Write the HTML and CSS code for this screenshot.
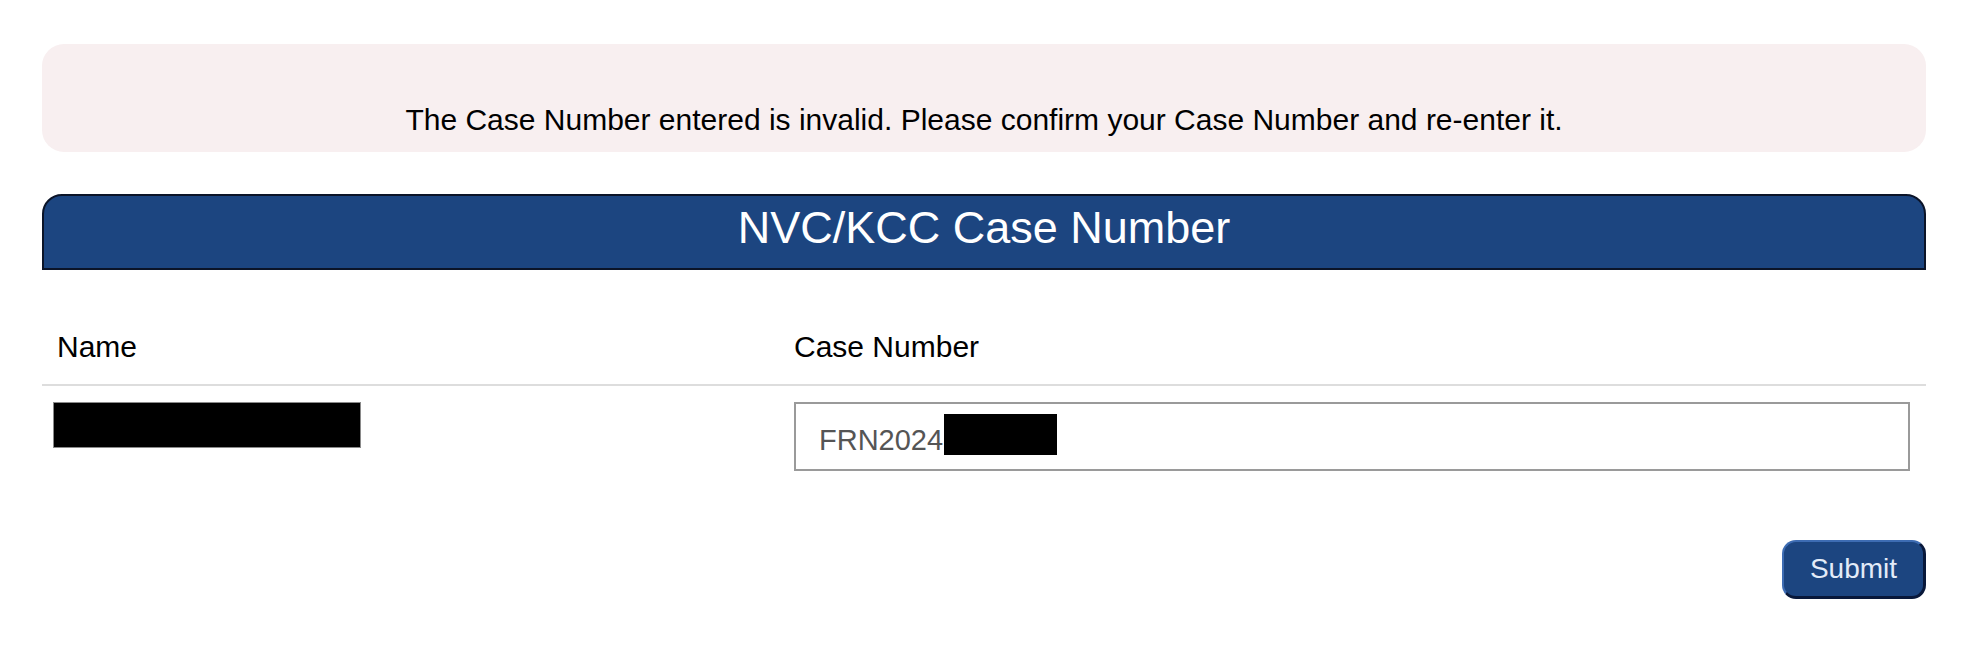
FILE: index.html
```html
<!DOCTYPE html>
<html lang="en">
<head>
    <meta charset="UTF-8">
    <meta name="viewport" content="width=device-width, initial-scale=1.0">
    <title>NVC/KCC Case Number</title>
    <link rel="stylesheet" href="styles.css">
</head>
<body>
    <div class="page">
        <div class="alert">
            The Case Number entered is invalid. Please confirm your Case Number and re-enter it.
        </div>

        <form class="case-form" onsubmit="return false;">
            <h2 class="panel-title">NVC/KCC Case Number</h2>

            <div class="case-grid head-row">
                <div class="cell">Name</div>
                <div class="cell">Case Number</div>
            </div>

            <div class="case-grid data-row">
                <div class="cell">
                    <span class="redacted name-redacted"></span>
                </div>
                <div class="cell">
                    <div class="case-field">
                        <input type="text" class="input_field" value="FRN2024">
                        <span class="redacted field-redacted"></span>
                    </div>
                </div>
            </div>

            <div class="actions">
                <button type="submit" class="submit-btn">Submit</button>
            </div>
        </form>
    </div>
</body>
</html>
```

FILE: styles.css
```css
:root {
    --navy: #1c4580;
    --navy-dark: #08183a;
    --navy-light: #3d6cb3;
    --alert-bg: #f8eff0;
    --line-color: #dddddd;
}

* {
    margin: 0;
    padding: 0;
    box-sizing: border-box;
}

body {
    background: #ffffff;
    color: #000000;
    font-family: "Liberation Sans", Arial, Helvetica, sans-serif;
}

.page {
    padding: 44px 52px 0 42px;
}

.alert {
    background: var(--alert-bg);
    border-radius: 22px;
    padding: 59px 16px 15px;
    text-align: center;
    font-size: 30px;
    line-height: 34px;
}

.panel-title {
    margin-top: 42px;
    background: var(--navy);
    color: #ffffff;
    border: 2px solid #0b1428;
    border-radius: 20px 20px 0 0;
    padding: 6px 0 14px;
    font-size: 45px;
    font-weight: 400;
    line-height: 52px;
    text-align: center;
}

.case-grid {
    display: grid;
    grid-template-columns: 737px 1fr;
    align-items: start;
}

.cell {
    padding: 0 16px 0 15px;
}

.head-row {
    padding: 60px 0 20px;
    border-bottom: 2px solid var(--line-color);
    font-size: 30px;
    line-height: 34px;
}

.data-row {
    padding-top: 16px;
}

.redacted {
    display: block;
    background: #000000;
}

.name-redacted {
    width: 308px;
    height: 46px;
    margin-left: -4px;
    border: 1px solid #8a8a8a;
}

.case-field {
    position: relative;
}

.input_field {
    display: block;
    width: 100%;
    height: 69px;
    border: 2px solid #9a9a9a;
    border-radius: 0;
    padding: 8px 0 0 23px;
    font-family: "Liberation Sans", Arial, Helvetica, sans-serif;
    font-size: 29px;
    color: #555555;
    background: #ffffff;
    outline: none;
}

/* blacked-out part of the case number */
.field-redacted {
    position: absolute;
    left: 150px;
    top: 12px;
    width: 113px;
    height: 41px;
}

.actions {
    display: flex;
    justify-content: flex-end;
    padding-top: 69px;
}

.submit-btn {
    width: 144px;
    height: 59px;
    background: var(--navy);
    color: #e3ebf8;
    border-style: solid;
    border-width: 2px 3px 3px 2px;
    border-color: var(--navy-light) var(--navy-dark) var(--navy-dark) var(--navy-light);
    border-radius: 14px;
    font-family: "Liberation Sans", Arial, Helvetica, sans-serif;
    font-size: 28px;
    cursor: pointer;
}
```
